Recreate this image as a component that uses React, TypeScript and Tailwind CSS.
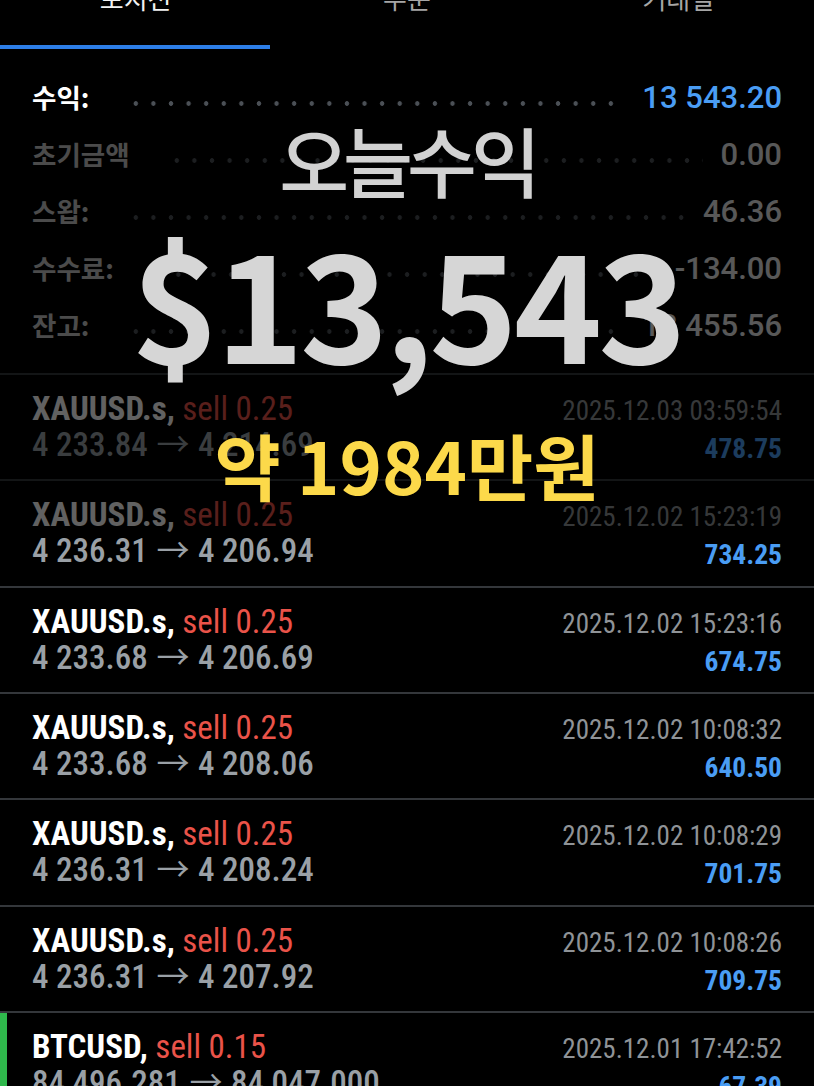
import React from "react";

type Row = {
  sym: string;
  side: string;
  from: string;
  to: string;
  date: string;
  profit: string;
  green?: boolean;
};

const rows: Row[] = [
  { sym: "XAUUSD.s", side: "sell 0.25", from: "4 233.84", to: "4 214.69", date: "2025.12.03 03:59:54", profit: "478.75" },
  { sym: "XAUUSD.s", side: "sell 0.25", from: "4 236.31", to: "4 206.94", date: "2025.12.02 15:23:19", profit: "734.25" },
  { sym: "XAUUSD.s", side: "sell 0.25", from: "4 233.68", to: "4 206.69", date: "2025.12.02 15:23:16", profit: "674.75" },
  { sym: "XAUUSD.s", side: "sell 0.25", from: "4 233.68", to: "4 208.06", date: "2025.12.02 10:08:32", profit: "640.50" },
  { sym: "XAUUSD.s", side: "sell 0.25", from: "4 236.31", to: "4 208.24", date: "2025.12.02 10:08:29", profit: "701.75" },
  { sym: "XAUUSD.s", side: "sell 0.25", from: "4 236.31", to: "4 207.92", date: "2025.12.02 10:08:26", profit: "709.75" },
  { sym: "BTCUSD", side: "sell 0.15", from: "84 496.281", to: "84 047.000", date: "2025.12.01 17:42:52", profit: "67.39", green: true },
];

const summary = [
  { label: "수익:", value: "13 543.20", main: true },
  { label: "초기금액", value: "0.00" },
  { label: "스왑:", value: "46.36" },
  { label: "수수료:", value: "-134.00" },
  { label: "잔고:", value: "13 455.56" },
];

function SummaryRow({ label, value, main }: { label: string; value: string; main?: boolean }) {
  return (
    <div className="flex h-[57px] items-center">
      <span
        className={`font-['Noto_Sans_CJK_KR',sans-serif] text-[26.5px] font-bold leading-none ${
          main ? "text-white" : "text-[#c4c4c4]"
        }`}
      >
        {label}
      </span>
      <div className="ml-[38px] mr-[18px] h-[5px] flex-1 translate-y-[6px] bg-[radial-gradient(circle,#4b5056_2px,transparent_2.6px)] bg-[length:17.6px_5px]" />
      <span
        className={`font-['Roboto',sans-serif] text-[31px] font-medium leading-none [font-stretch:normal] ${
          main ? "text-[#4a9df4]" : "text-[#e6e6e6]"
        }`}
      >
        {value}
      </span>
    </div>
  );
}

function TradeRow({ r }: { r: Row }) {
  return (
    <div className="flex h-[106.33px] border-t-2 border-[#34373b]">
      <div className={`w-[7px] ${r.green ? "bg-[#2fb84c]" : ""}`} />
      <div className="flex flex-1 justify-between pl-[25px] pr-8">
        <div className="pt-[17px]">
          <div className="text-[33px] leading-[33px] whitespace-pre">
            <span className="font-bold text-white">{r.sym},</span>
            <span className="text-[#ea5349]"> {r.side}</span>
          </div>
          <div className="text-[33px] font-medium leading-[34px] text-[#9aa0a6] whitespace-pre">
            {r.from}{" "}
            <span className="mx-[1px] font-['Noto_Sans_CJK_KR',sans-serif] font-normal">→</span>{" "}
            {r.to}
          </div>
        </div>
        <div className="flex flex-col items-end pt-[20px]">
          <div className="text-[27px] leading-[33px] text-[#8f9397]">{r.date}</div>
          <div className="mt-[4px] text-[27.5px] font-bold leading-[33px] text-[#4a9df4]">{r.profit}</div>
        </div>
      </div>
    </div>
  );
}

export default function App() {
  return (
    <div className="relative h-[1086px] w-[814px] overflow-hidden bg-black font-['Roboto_Condensed','Roboto',sans-serif] [font-stretch:condensed]">
      {/* tabs */}
      <div className="grid h-[49px] grid-cols-3 font-['Noto_Sans_CJK_KR',sans-serif]">
        <div className="flex flex-col">
          <div className="-mt-[15px] text-center text-[26px] leading-[26px] text-[#f2f2f2]">포지션</div>
          <div className="mt-auto h-[4px] w-[270px] bg-[#2d7ee8]" />
        </div>
        <div className="flex flex-col">
          <div className="-mt-[15px] text-center text-[26px] leading-[26px] text-[#a6a6a6]">주문</div>
        </div>
        <div className="flex flex-col">
          <div className="-mt-[15px] text-center text-[26px] leading-[26px] text-[#a6a6a6]">거래일</div>
        </div>
      </div>

      {/* summary */}
      <div className="px-8 py-[19.5px]">
        {summary.map((s) => (
          <SummaryRow key={s.label} label={s.label} value={s.value} main={s.main} />
        ))}
      </div>

      {/* trades */}
      <div>
        {rows.map((r, i) => (
          <TradeRow key={i} r={r} />
        ))}
      </div>

      {/* dark caption overlay */}
      <div className="absolute left-0 right-0 top-[122px] h-[411px] bg-black/[0.62]" />

      {/* captions */}
      <div className="absolute left-0 right-0 top-[121px] flex flex-col items-center font-['Noto_Sans_CJK_KR',sans-serif]">
        <div className="text-[76px] font-medium leading-none tracking-[-6px] text-[#d2d2d2]">오늘수익</div>
        <div className="mt-[27px] text-[150px] font-bold leading-none tracking-[-4px] text-[#d6d6d6]">$13,543</div>
        <div className="mt-[54px] text-[72px] font-bold leading-none text-[#fcd94a]">약 1984만원</div>
      </div>
    </div>
  );
}
